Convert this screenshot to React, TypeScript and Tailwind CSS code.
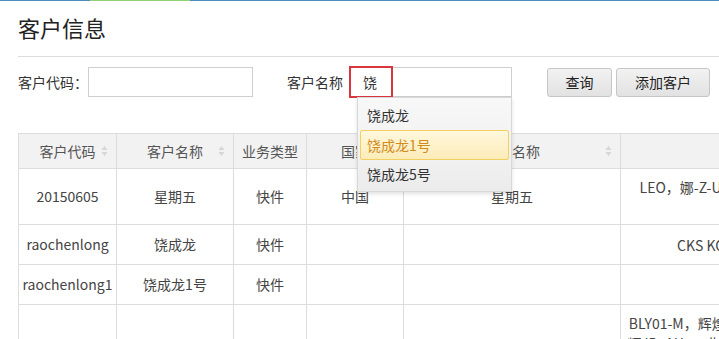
import React from "react"

const font = "font-['Noto_Sans_CJK_SC','Microsoft_YaHei',sans-serif]"

function SortIcon() {
  return (
    <svg width="7" height="12" viewBox="0 0 7 12" className="absolute right-[8px] top-1/2 -translate-y-1/2">
      <path d="M3.5 1 L6.5 5 L0.5 5 Z" fill="#d6d6d6" />
      <path d="M3.5 11 L6.5 7 L0.5 7 Z" fill="#d6d6d6" />
    </svg>
  )
}

const headers = [
  { label: "客户代码", sort: true },
  { label: "客户名称", sort: true },
  { label: "业务类型", sort: false },
  { label: "国家", sort: false },
  { label: "公司名称", sort: true },
  { label: "", sort: false },
]

const rows = [
  {
    h: "h-[56px]",
    cells: ["20150605", "星期五", "快件", "中国", "星期五"],
    last: ["LEO，娜-Z-U01，CKS KOREA，ABC-1234", "AH1"],
    top: true,
  },
  { h: "h-[40px]", cells: ["raochenlong", "饶成龙", "快件", "", ""], last: ["CKS KOREA，AB-01，LEO-12"], top: false },
  { h: "h-[40px]", cells: ["raochenlong1", "饶成龙1号", "快件", "", ""], last: [""], top: false },
  {
    h: "h-[60px]",
    cells: ["", "", "", "", ""],
    last: ["BLY01-M，辉煌 ID: AH1，LEO，CKS KOREA1", "辉 ID: AH1，业务 KOREA 快件，ABC-12，CKS", "CKS"],
    top: true,
  },
]

export default function App() {
  return (
    <div className={`w-[719px] h-[339px] overflow-hidden bg-white text-[#333] ${font}`}>
      <div className="flex h-px">
        <div className="w-[90px] bg-[#4d8cbd]" />
        <div className="w-[100px] bg-[#93cf74]" />
        <div className="flex-1 bg-[#4d8cbd]" />
      </div>
      <div className="w-[1000px] pl-[18px]">
        <h1 className="pt-[11px] text-[22px] leading-[30px] text-[#222]">客户信息</h1>
        <div className="mt-[14px] h-px bg-[#dcdcdc]" />

        <div className="mt-[10px] flex items-center text-[14px]">
          <span className="text-[#333]">客户代码：</span>
          <input className="h-[30px] w-[165px] border border-[#cfcfcf] bg-white outline-none" />
          <span className="ml-[34px] text-[#333]">客户名称</span>
          <div className="relative ml-[6px]">
            <div className="flex h-[30px] w-[163px] items-center border border-[#cfcfcf] bg-white pl-[13px] text-[#333]">
              饶
            </div>
            <div className="absolute left-0 top-[-1px] h-[32px] w-[44px] border-2 border-[#d9363e]" />
            <div className="absolute left-[8px] top-[30px] z-10 w-[155px] border border-[#d8d8d8] bg-gradient-to-b from-[#f8f8f8] to-[#ececec] px-[2px] pb-[2px] pt-[3px] shadow-[0_2px_4px_rgba(0,0,0,0.12)]">
              <div className="flex h-[29px] items-center pl-[7px] text-[#333]">饶成龙</div>
              <div className="flex h-[30px] items-center rounded-[2px] border border-[#f3cf62] bg-gradient-to-b from-[#fff8dd] to-[#fcecb8] pl-[6px] text-[#d38a1c]">
                饶成龙1号
              </div>
              <div className="flex h-[29px] items-center pl-[7px] text-[#333]">饶成龙5号</div>
            </div>
          </div>
          <button className="ml-[35px] h-[29px] w-[65px] rounded-[3px] border border-[#c6c6c6] bg-gradient-to-b from-[#f2f2f2] to-[#e2e2e2] text-[#222]">
            查询
          </button>
          <button className="ml-[4px] h-[29px] w-[94px] rounded-[3px] border border-[#c6c6c6] bg-gradient-to-b from-[#f2f2f2] to-[#e2e2e2] text-[#222]">
            添加客户
          </button>
        </div>

        <table className="mt-[36px] w-[902px] table-fixed border-collapse text-[14px]">
          <colgroup>
            <col className="w-[98px]" />
            <col className="w-[117px]" />
            <col className="w-[73px]" />
            <col className="w-[97px]" />
            <col className="w-[217px]" />
            <col className="w-[300px]" />
          </colgroup>
          <thead>
            <tr className="h-[35px] bg-[#f2f2f2]">
              {headers.map((h, i) => (
                <th key={i} className="relative border border-[#dcdcdc] p-0 text-center font-normal text-[#555]">
                  {h.label}
                  {h.sort && <SortIcon />}
                </th>
              ))}
            </tr>
          </thead>
          <tbody>
            {rows.map((r, i) => (
              <tr key={i} className={r.h}>
                {r.cells.map((c, j) => (
                  <td key={j} className="whitespace-nowrap border border-[#dcdcdc] p-0 text-center text-[#444]">
                    {c}
                  </td>
                ))}
                <td
                  className={`whitespace-nowrap border border-[#dcdcdc] px-0 text-center leading-[20px] text-[#444] ${
                    r.top ? "pt-[8px] align-top" : ""
                  }`}
                >
                  {r.last.map((l, k) => (
                    <div key={k}>{l}</div>
                  ))}
                </td>
              </tr>
            ))}
          </tbody>
        </table>
      </div>
    </div>
  )
}
